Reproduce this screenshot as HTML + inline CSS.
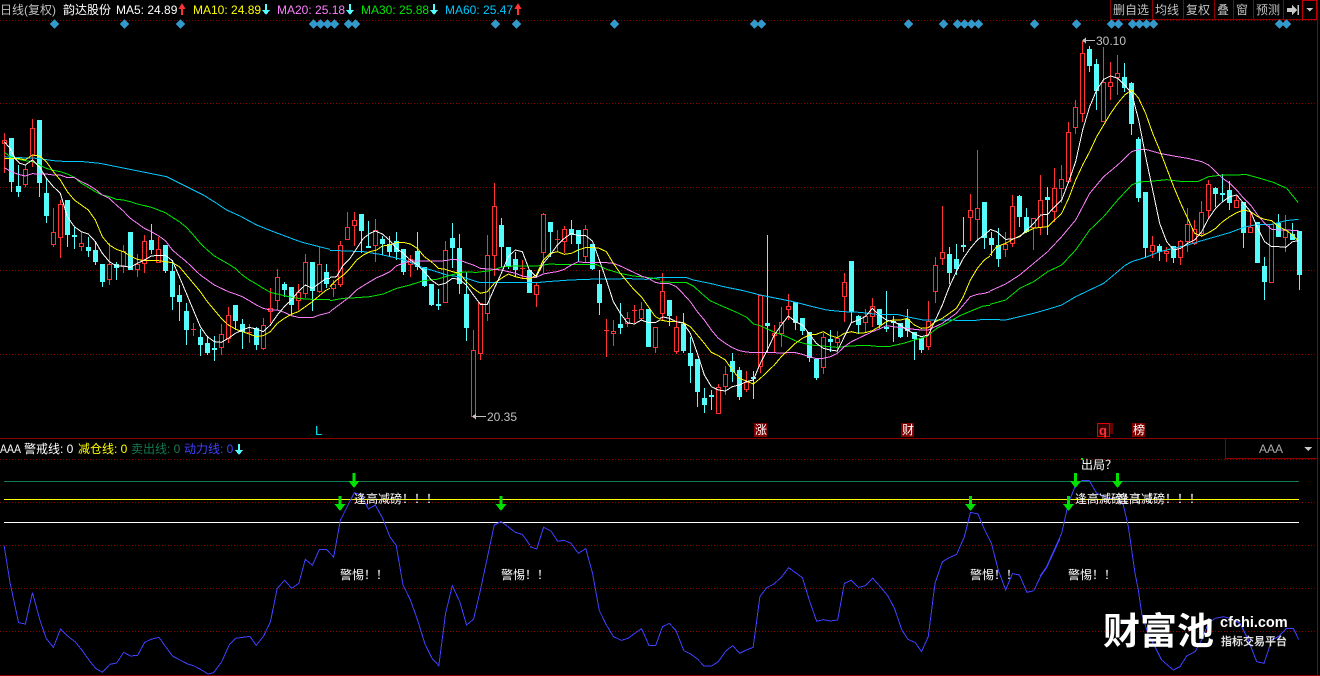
<!DOCTYPE html>
<html><head><meta charset="utf-8"><title>AAA</title>
<style>
html,body{margin:0;padding:0;background:#000;width:1320px;height:676px;overflow:hidden}
svg{display:block;position:absolute;left:0;top:0}
text{font-family:"Liberation Sans","WenQuanYi Zen Hei","Noto Sans CJK SC",sans-serif;font-size:12px}
polyline{fill:none;vector-effect:non-scaling-stroke;stroke-width:1}
.w polyline{stroke:#fff}.y polyline{stroke:#ff0}.m polyline{stroke:#ff80ff}.g polyline{stroke:#00e600}.c polyline{stroke:#00c8ff}
</style></head><body>
<svg width="1320" height="676" viewBox="0 0 1320 676" xmlns="http://www.w3.org/2000/svg" shape-rendering="crispEdges">
<rect width="1320" height="676" fill="#000"/>
<!-- grid -->
<g stroke="#8c0000" stroke-dasharray="1 2" fill="none">
<path d="M0 20.5H1320M0 103.5H1320M0 187.5H1320M0 270.5H1320M0 354.5H1320M0 459.5H1320M0 502.5H1320M0 545.5H1320M0 588.5H1320M0 631.5H1320"/>
</g>
<!-- frame -->
<g stroke="#8c0000" fill="none">
<path d="M0 438.5H1320M0 675.5H1320M1317.5 0V676M1225.5 438V458.5H1317"/>
<path d="M1110.5 0V19.5H1302M1152.5 0V19M1183.5 0V19M1214.5 0V19M1233.5 0V19M1253.5 0V19M1283.5 0V19"/>
<path d="M1302.5 0.5H1316.5V19.5H1302.5z" stroke="#c00000"/>
</g>
<!-- diamonds -->
<g fill="#3399cc" stroke="#3399cc" stroke-width="1" stroke-linejoin="round">
<path d="M54.5 20l4 4-4 4-4-4zM124.5 20l4 4-4 4-4-4zM180.5 20l4 4-4 4-4-4zM313.5 20l4 4-4 4-4-4zM320.5 20l4 4-4 4-4-4zM327.5 20l4 4-4 4-4-4zM334.5 20l4 4-4 4-4-4zM348.5 20l4 4-4 4-4-4zM355.5 20l4 4-4 4-4-4zM495.5 20l4 4-4 4-4-4zM516.5 20l4 4-4 4-4-4zM614.5 20l4 4-4 4-4-4zM754.5 20l4 4-4 4-4-4zM761.5 20l4 4-4 4-4-4zM908.5 20l4 4-4 4-4-4zM943.5 20l4 4-4 4-4-4zM957.5 20l4 4-4 4-4-4zM964.5 20l4 4-4 4-4-4zM971.5 20l4 4-4 4-4-4zM978.5 20l4 4-4 4-4-4zM1034.5 20l4 4-4 4-4-4zM1076.5 20l4 4-4 4-4-4zM1111.5 20l4 4-4 4-4-4zM1118.5 20l4 4-4 4-4-4zM1132.5 20l4 4-4 4-4-4zM1139.5 20l4 4-4 4-4-4zM1146.5 20l4 4-4 4-4-4zM1153.5 20l4 4-4 4-4-4zM1279.5 20l4 4-4 4-4-4zM1286.5 20l4 4-4 4-4-4z"/>
</g>
<!-- cyan candles -->
<path fill="none" stroke="#54fcfc" d="M11.5 138V192M18.5 165V197M39.5 120V197M46.5 179V223M67.5 200V247M74.5 227V249M88.5 237V257M95.5 241V265M102.5 264V287M116.5 262V280M151.5 224V254M165.5 245V273M172.5 260V310M179.5 285V321M186.5 303V345M200.5 329V356M207.5 336V355M214.5 336V361M235.5 305V330M242.5 319V349M256.5 327V350M284.5 282V297M291.5 287V316M312.5 262V311M326.5 264V288M361.5 214V253M368.5 221V248M382.5 236V255M389.5 236V257M396.5 232V260M403.5 249V275M417.5 232V270M424.5 267V287M431.5 284V306M438.5 289V310M452.5 223V268M459.5 234V294M466.5 272V341M501.5 218V267M508.5 247V269M515.5 252V277M550.5 222V257M571.5 220V244M578.5 230V261M592.5 244V270M599.5 270V315M620.5 303V334M669.5 300V326M683.5 313V353M690.5 337V383M697.5 359V407M704.5 388V413M711.5 390V410M732.5 353V382M739.5 367V400M753.5 371V399M767.5 235V353M795.5 302V330M802.5 318V335M809.5 332V362M816.5 359V380M830.5 330V352M851.5 261V322M858.5 315V333M879.5 309V328M886.5 291V332M893.5 316V342M900.5 323V338M907.5 309V337M914.5 332V360M921.5 338V353M949.5 247V284M956.5 244V275M963.5 217V252M984.5 202V249M991.5 232V256M998.5 228V267M1019.5 195V227M1026.5 208V233M1047.5 187V235M1089.5 46V72M1096.5 59V110M1124.5 63V92M1131.5 82V135M1138.5 137V202M1145.5 192V257M1159.5 244V261M1173.5 246V263M1215.5 187V207M1222.5 174V202M1229.5 181V210M1243.5 202V248M1264.5 257V300M1278.5 214V237M1292.5 223V240M1299.5 231V290"/>
<path fill="#54fcfc" d="M9 138h5V182h-5zM16 186h5V192h-5zM37 120h5V183h-5zM44 193h5V216h-5zM65 200h5V235h-5zM72 235h5V237h-5zM86 247h5V251h-5zM93 250h5V262h-5zM100 264h5V282h-5zM114 264h5V268h-5zM128 232h5V270h-5zM149 240h5V250h-5zM163 245h5V271h-5zM170 271h5V297h-5zM177 295h5V302h-5zM184 311h5V330h-5zM198 337h5V345h-5zM205 343h5V353h-5zM212 348h5V350h-5zM233 305h5V321h-5zM240 324h5V332h-5zM254 328h5V345h-5zM282 284h5V290h-5zM289 287h5V305h-5zM310 262h5V291h-5zM324 272h5V284h-5zM359 214h5V231h-5zM366 246h5V248h-5zM380 239h5V244h-5zM387 244h5V252h-5zM394 241h5V252h-5zM401 249h5V272h-5zM415 251h5V267h-5zM422 267h5V286h-5zM429 284h5V305h-5zM436 304h5V306h-5zM450 238h5V248h-5zM457 248h5V284h-5zM464 294h5V328h-5zM499 225h5V247h-5zM506 247h5V267h-5zM513 259h5V270h-5zM527 270h5V293h-5zM548 222h5V232h-5zM569 229h5V235h-5zM576 230h5V244h-5zM590 244h5V269h-5zM597 284h5V303h-5zM618 324h5V328h-5zM646 309h5V347h-5zM667 300h5V316h-5zM681 324h5V351h-5zM688 353h5V366h-5zM695 359h5V392h-5zM702 398h5V405h-5zM709 395h5V397h-5zM730 361h5V372h-5zM737 370h5V397h-5zM751 377h5V379h-5zM765 323h5V326h-5zM793 302h5V323h-5zM800 318h5V331h-5zM807 332h5V358h-5zM814 359h5V378h-5zM828 339h5V342h-5zM849 261h5V312h-5zM856 316h5V325h-5zM877 309h5V325h-5zM884 327h5V329h-5zM891 321h5V323h-5zM898 323h5V337h-5zM905 319h5V331h-5zM912 332h5V339h-5zM919 338h5V350h-5zM947 254h5V273h-5zM954 259h5V269h-5zM961 245h5V247h-5zM982 202h5V238h-5zM989 238h5V245h-5zM996 245h5V259h-5zM1017 196h5V217h-5zM1024 217h5V232h-5zM1045 197h5V200h-5zM1087 49h5V66h-5zM1094 64h5V91h-5zM1122 77h5V88h-5zM1129 83h5V124h-5zM1136 139h5V198h-5zM1143 192h5V248h-5zM1157 246h5V252h-5zM1171 246h5V258h-5zM1213 188h5V194h-5zM1220 193h5V195h-5zM1227 190h5V203h-5zM1241 202h5V233h-5zM1255 222h5V263h-5zM1262 266h5V282h-5zM1276 223h5V237h-5zM1290 234h5V240h-5zM1297 231h5V275h-5z"/>
<!-- red candles -->
<path fill="none" stroke="#ff3232" d="M4.5 133V173M25.5 165V187M32.5 119V167M53.5 208V247M60.5 200V258M81.5 232V251M109.5 243V285M123.5 245V273M137.5 254V277M144.5 235V273M158.5 237V262M193.5 323V336M221.5 324V355M228.5 307V343M249.5 324V343M263.5 318V350M270.5 288V323M277.5 269V310M298.5 284V310M305.5 254V298M319.5 247V293M333.5 280V297M340.5 241V287M347.5 212V239M354.5 212V246M375.5 219V262M410.5 255V277M445.5 241V302M473.5 330V416M480.5 303V360M487.5 235V321M494.5 183V276M522.5 260V278M536.5 283V307M543.5 213V273M557.5 230V252M564.5 226V253M585.5 225V262M606.5 319V357M613.5 320V346M627.5 312V327M634.5 305V323M641.5 302V321M655.5 327V353M662.5 273V320M676.5 316V354M718.5 384V413M725.5 366V395M746.5 371V392M760.5 295V373M774.5 325V353M781.5 307V347M788.5 294V320M823.5 333V374M837.5 331V350M844.5 273V322M865.5 309V332M872.5 298V327M928.5 301V350M935.5 257V303M942.5 206V265M970.5 194V241M977.5 150V240M1005.5 232V257M1012.5 195V247M1033.5 218V250M1040.5 175V235M1054.5 168V222M1061.5 165V203M1068.5 122V182M1075.5 100V134M1082.5 41V122M1103.5 47V122M1110.5 62V100M1117.5 55V95M1152.5 236V258M1166.5 247V262M1180.5 240V265M1187.5 208V252M1194.5 220V245M1201.5 201V237M1208.5 180V218M1236.5 196V208M1250.5 212V232M1271.5 224V282M1285.5 215V252"/>
<path fill="#000" stroke="#ff3232" d="M2.5 140.5h4V143.5h-4zM23.5 169.5h4V184.5h-4zM30.5 128.5h4V155.5h-4zM51.5 232.5h4V244.5h-4zM58.5 204.5h4V237.5h-4zM79.5 243.5h4V246.5h-4zM107.5 264.5h4V279.5h-4zM121.5 251.5h4V266.5h-4zM135.5 264.5h4V269.5h-4zM142.5 241.5h4V263.5h-4zM156.5 249.5h4V262.5h-4zM219.5 334.5h4V347.5h-4zM226.5 315.5h4V338.5h-4zM261.5 325.5h4V348.5h-4zM268.5 308.5h4V311.5h-4zM275.5 277.5h4V300.5h-4zM296.5 292.5h4V300.5h-4zM303.5 262.5h4V293.5h-4zM317.5 264.5h4V291.5h-4zM331.5 284.5h4V288.5h-4zM338.5 245.5h4V284.5h-4zM345.5 227.5h4V239.5h-4zM352.5 220.5h4V225.5h-4zM373.5 230.5h4V245.5h-4zM408.5 259.5h4V264.5h-4zM443.5 250.5h4V302.5h-4zM471.5 350.5h4V416.5h-4zM478.5 303.5h4V353.5h-4zM485.5 255.5h4V313.5h-4zM492.5 206.5h4V255.5h-4zM534.5 285.5h4V294.5h-4zM541.5 214.5h4V252.5h-4zM562.5 229.5h4V241.5h-4zM583.5 229.5h4V256.5h-4zM611.5 331.5h4V333.5h-4zM625.5 318.5h4V323.5h-4zM639.5 309.5h4V318.5h-4zM653.5 327.5h4V347.5h-4zM660.5 291.5h4V313.5h-4zM674.5 327.5h4V351.5h-4zM716.5 387.5h4V413.5h-4zM723.5 374.5h4V386.5h-4zM744.5 382.5h4V389.5h-4zM758.5 295.5h4V366.5h-4zM772.5 333.5h4V335.5h-4zM779.5 322.5h4V333.5h-4zM786.5 306.5h4V309.5h-4zM821.5 337.5h4V367.5h-4zM835.5 338.5h4V342.5h-4zM842.5 282.5h4V296.5h-4zM863.5 316.5h4V322.5h-4zM870.5 306.5h4V316.5h-4zM926.5 321.5h4V346.5h-4zM933.5 265.5h4V291.5h-4zM940.5 252.5h4V258.5h-4zM968.5 210.5h4V217.5h-4zM975.5 208.5h4V219.5h-4zM1003.5 244.5h4V249.5h-4zM1010.5 206.5h4V243.5h-4zM1031.5 218.5h4V227.5h-4zM1038.5 200.5h4V227.5h-4zM1052.5 188.5h4V211.5h-4zM1059.5 179.5h4V188.5h-4zM1066.5 132.5h4V181.5h-4zM1073.5 107.5h4V127.5h-4zM1080.5 53.5h4V113.5h-4zM1101.5 82.5h4V121.5h-4zM1108.5 82.5h4V86.5h-4zM1115.5 73.5h4V77.5h-4zM1150.5 245.5h4V251.5h-4zM1164.5 251.5h4V253.5h-4zM1178.5 241.5h4V257.5h-4zM1185.5 224.5h4V241.5h-4zM1192.5 229.5h4V243.5h-4zM1199.5 212.5h4V233.5h-4zM1206.5 184.5h4V210.5h-4zM1234.5 200.5h4V207.5h-4zM1248.5 227.5h4V232.5h-4zM1269.5 224.5h4V282.5h-4zM1283.5 230.5h4V237.5h-4z"/>
<path stroke="#ff3232" fill="none" d="M191 329.5h5M247 332.5h5M520 268.5h5M555 239.5h5M604 330.5h5M632 310.5h5"/>
<!-- moving averages -->
<g>
<g transform="translate(0 130) scale(.33333)">
<g class="c"><polyline points="13,80 55,83 97,84 118,86 160,92 190,94 250,95 300,100 340,108 400,120 440,128 500,140 530,155 570,175 610,195 650,220 680,240 720,258 770,285 820,305 860,320 900,335 950,348 990,358"/></g>
<g class="g"><polyline points="13,67 34,82 55,88 76,92 97,95 118,105 139,115 160,121 181,125 202,132 223,142 244,160 265,172 286,185 307,195 328,200 349,208 370,210 391,215 412,222 433,227 454,232 475,240 496,248 517,262 538,275 559,292 580,315 601,340 622,360 643,378 664,390 685,402 706,415 727,435 748,450 769,462 790,475 811,487 832,492 853,497 874,502 895,505 916,507 937,508 958,508 979,508 990,508"/></g>
<g class="m"><polyline points="13,113 34,125 55,133 76,138 97,131 118,132 139,132 160,135 181,135 202,143 223,143 244,155 265,165 286,178 307,195 328,205 349,225 370,243 391,265 412,280 433,295 454,305 475,317 496,332 517,360 538,378 559,395 580,415 601,435 622,450 643,465 664,475 685,485 706,492 727,500 748,512 769,525 790,535 811,540 832,540 853,547 874,557 895,562 916,562 937,563 958,555 979,550 990,547"/></g>
<g class="y"><polyline points="13,85 34,85 55,85 76,90 97,75 118,78 139,95 160,125 181,150 202,185 223,210 244,225 265,240 286,270 307,320 328,345 349,358 370,365 391,378 412,388 433,392 454,392 475,392 496,395 517,398 538,410 559,435 580,460 601,485 622,515 643,540 664,565 685,585 706,597 727,605 748,612 769,620 790,617 811,605 832,580 853,565 874,553 895,545 916,530 937,515 958,497 979,480 990,475"/></g>
<g class="w"><polyline points="13,35 30,55 45,85 60,100 76,105 97,90 118,110 139,145 160,170 181,190 202,260 223,290 244,305 265,312 286,335 307,370 328,395 349,408 370,408 391,412 412,400 433,390 454,378 475,376 496,376 517,392 538,440 559,490 580,540 601,590 622,620 643,635 664,637 685,625 706,610 727,600 748,592 769,597 790,605 811,585 832,555 853,530 874,510 895,485 916,465 937,475 958,460 979,445 990,445"/></g>
</g>
<g transform="translate(330 170) scale(.33333)">
<g class="c"><polyline points="0,241 50,243 100,245 150,253 190,262 230,272 270,290 310,302 350,315 400,322 450,338 500,338 550,338 620,338 650,335 720,330 800,327 900,326 950,328 990,322"/></g>
<g class="g"><polyline points="0,392 40,385 80,383 120,380 160,372 200,355 240,345 280,332 320,328 360,316 400,306 440,307 480,302 520,290 560,288 620,288 660,282 700,284 750,283 800,284 830,298 870,310 910,318 950,322 990,328"/></g>
<g class="m"><polyline points="0,425 20,410 40,395 60,380 80,360 100,347 120,335 140,323 160,315 180,305 200,287 220,280 241,273 262,273 283,273 304,273 325,273 346,272 367,268 388,270 409,278 430,285 451,295 472,297 493,298 514,300 535,305 556,310 577,318 598,322 619,322 640,312 661,308 682,305 703,298 724,285 745,275 766,278 787,278 808,278 829,278 850,280 871,288 892,298 913,308 934,318 955,325 976,337 990,340"/></g>
<g class="y"><polyline points="0,350 20,330 40,315 60,295 80,270 100,255 120,245 140,240 157,228 178,225 199,218 220,217 241,222 262,235 283,260 304,275 325,295 346,298 367,305 388,310 409,335 430,355 451,370 472,365 493,340 514,325 535,312 556,320 577,325 598,327 619,315 640,270 661,250 682,245 703,253 724,250 745,240 766,233 787,232 808,235 829,245 850,280 871,310 892,335 913,360 934,380 955,410 976,440 990,447"/></g>
<g class="w"><polyline points="0,322 20,320 40,285 60,265 80,235 100,205 120,190 136,183 157,192 178,210 199,235 220,250 241,270 262,285 283,305 304,330 325,345 346,340 367,325 388,328 409,345 430,375 451,403 472,403 493,355 514,310 535,260 556,240 577,245 598,300 619,320 640,280 661,255 682,225 703,205 724,190 745,197 766,196 787,213 808,270 829,330 850,395 871,430 892,458 913,462 934,450 955,458 976,458 990,450"/></g>
</g>
<g transform="translate(660 180) scale(.33333)">
<g class="c"><polyline points="0,292 78,292 100,300 150,310 200,322 250,332 300,345 350,355 400,365 450,378 500,390 550,395 600,397 650,403 710,403 750,412 790,420 850,420 940,422 970,418 990,418"/></g>
<g class="g"><polyline points="0,306 40,307 80,308 100,318 130,345 150,362 190,380 230,397 260,412 280,432 300,437 340,455 380,470 410,484 450,495 490,498 530,502 570,498 620,496 650,499 690,499 730,490 770,478 800,470 830,445 860,430 900,407 940,390 970,378 990,376"/></g>
<g class="m"><polyline points="0,311 28,311 49,320 70,342 91,365 112,395 133,420 154,450 175,475 196,490 217,503 238,512 259,516 280,518 322,518 343,518 364,519 385,518 406,518 427,523 448,530 469,536 490,535 511,530 532,520 553,500 574,485 595,475 616,465 637,455 658,447 679,437 700,440 721,443 742,445 763,448 784,450 805,450 826,440 847,430 868,415 889,400 910,375 931,350 952,343 973,340 990,335"/></g>
<g class="y"><polyline points="0,420 28,425 49,425 70,428 91,440 112,465 133,490 154,517 175,527 196,540 217,570 238,595 259,603 280,612 301,595 322,575 343,555 364,530 385,510 406,490 427,475 448,465 469,463 490,455 511,467 532,473 553,460 574,455 595,460 616,458 637,452 658,440 679,425 700,420 721,420 742,415 763,435 784,445 805,443 826,425 847,415 868,400 889,385 910,350 931,300 952,265 973,240 990,228"/></g>
<g class="w"><polyline points="0,415 10,411 28,415 49,425 70,430 91,460 112,520 133,585 154,620 175,630 196,633 217,620 238,615 259,605 280,600 301,550 322,510 343,465 364,435 385,408 406,425 427,435 448,462 469,490 490,505 511,510 532,513 553,470 574,428 595,420 616,410 637,385 658,405 679,420 700,425 721,435 742,450 763,462 784,470 805,465 826,420 847,375 868,320 889,275 910,235 931,205 952,180 973,165 990,150"/></g>
</g>
<g transform="translate(990 30) scale(.33333)">
<g class="c"><polyline points="0,868 47,870 89,860 131,850 173,838 215,825 257,800 299,780 341,760 383,725 404,707 425,695 467,682 509,665 551,655 593,645 635,632 677,620 719,608 761,592 803,583 845,583 866,578 887,572 925,568"/></g>
<g class="g"><polyline points="0,823 47,810 89,775 131,755 173,725 215,705 257,660 299,600 341,560 383,510 425,465 446,456 490,453 530,449 570,454 625,454 656,440 700,435 770,434 810,445 850,457 890,475 925,518"/></g>
<g class="m"><polyline points="0,783 47,762 89,735 131,700 173,665 215,620 257,570 299,490 341,440 383,405 404,385 425,365 446,358 467,358 509,370 551,378 593,385 635,395 656,405 677,425 698,445 719,460 740,480 761,505 782,525 803,555 824,580 845,598 866,600 887,600 925,602"/></g>
<g class="y"><polyline points="0,675 20,650 47,640 68,628 89,618 110,605 131,595 152,592 173,590 194,570 215,550 236,505 257,450 278,405 299,365 320,320 341,285 362,250 383,220 404,195 425,180 446,205 467,250 488,310 509,360 530,415 551,470 572,520 593,565 614,610 635,618 656,608 677,595 698,575 719,560 740,548 761,540 782,545 803,560 824,568 845,572 866,590 887,600 908,615 925,632"/></g>
<g class="w"><polyline points="0,598 20,605 47,628 68,627 89,620 110,600 131,580 152,555 173,553 194,530 215,510 236,455 257,395 278,300 299,230 320,180 341,148 362,138 383,145 404,165 425,190 446,270 467,380 488,480 509,580 530,635 551,660 572,655 593,640 614,630 635,605 656,565 677,535 698,515 719,500 740,495 761,520 782,545 803,595 824,635 845,650 866,650 887,652 908,635 925,632"/></g>
</g>
</g>
<!-- indicator levels -->
<path fill="none" stroke="#127a50" d="M4 481.5H1299"/>
<path fill="none" stroke="#ffff00" d="M4 499.5H1299"/>
<path fill="none" stroke="#ffffff" d="M4 522.5H1299"/>
<!-- blue line -->
<g>
<polyline stroke="#4040ff" transform="translate(0 420) scale(.33807 .33333)" points="12,376 30,490 55,608 75,612 96,518 118,600 137,656 158,682 179,627 200,648 222,665 242,690 263,720 284,746 303,757 325,733 345,729 366,697 386,708 407,706 428,667 449,657 470,652 510,708 555,732 572,737 600,752 615,762 632,758 655,727 678,675 697,655 739,649 758,676 780,648 800,605 820,505 842,481 863,505 884,490 903,418 924,436 945,388 965,388 987,411 1007,300 1048,218 1068,225 1090,267 1110,255 1132,295 1153,350 1172,376 1192,495 1214,540 1235,600 1257,672 1278,715 1298,737 1318,580 1338,497 1360,545 1380,615 1401,597 1420,515 1440,420 1462,315 1482,305 1503,320 1524,337 1545,343 1568,376"/>
<polyline stroke="#4040ff" transform="translate(530 420) scale(.33807 .33333)" points="0,380 20,387 40,322 62,333 82,364 100,361 120,369 143,400 165,386 185,460 205,572 226,615 247,650 270,661 290,655 310,640 330,626 352,676 372,676 392,620 412,610 432,632 455,692 475,702 495,717 515,738 537,738 557,725 580,692 600,677 620,700 640,690 660,682 680,530 700,503 722,492 745,470 765,443 785,458 806,473 826,540 848,604 868,599 888,603 910,600 930,490 950,481 972,502 992,497 1014,475 1036,500 1058,527 1078,565 1100,630 1118,658 1140,668 1158,695 1178,650 1198,490 1220,425 1240,413 1262,403 1285,350 1303,277 1325,282 1345,330 1365,370 1385,450 1407,510 1427,461 1448,465 1470,517 1490,512 1510,470 1528,443 1548,400 1568,355"/>
<polyline stroke="#4040ff" transform="translate(1040 420) scale(.33333)" points="0,468 20,440 40,395 65,340 85,250 105,200 125,182 148,182 170,220 190,228 210,236 233,232 250,255 265,320 285,460 295,510 305,580 325,645 345,680 365,720 400,750 420,740 440,708 465,695 485,660 505,610 525,595 550,590 570,595 600,610 625,660 650,725 672,730 695,660 715,650 740,625 760,625 776,658"/>
</g>
<!-- green arrows -->
<g fill="#00e000">
<path d="M352.5 473h3v8h4l-5.500 7-5.500-7h4zM338.500 496h3v8h4l-5.500 7-5.500-7h4zM499.500 496h3v8h4l-5.500 7-5.500-7h4zM969 496h3v8h4l-5.500 7-5.500-7h4zM1074 473h3v8h4l-5.500 7-5.500-7h4zM1116 473h3v8h4l-5.500 7-5.500-7h4zM1067 496h3v8h4l-5.500 7-5.500-7h4z"/>
<path d="M1081 458h2v2h-2z"/>
</g>
<!-- text -->
<g shape-rendering="auto">
<text x="0" y="14" fill="#c0c0c0">日线(复权)</text>
<text x="63" y="14" fill="#fff">韵达股份</text>
<text x="116" y="14" fill="#fff">MA5: 24.89</text>
<text x="193" y="14" fill="#ff0">MA10: 24.89</text>
<text x="277" y="14" fill="#ff80ff">MA20: 25.18</text>
<text x="361" y="14" fill="#00e600">MA30: 25.88</text>
<text x="445" y="14" fill="#00c8ff">MA60: 25.47</text>
<g fill="#c0c0c0">
<text x="1113" y="14">删自选</text>
<text x="1155" y="14">均线</text>
<text x="1186" y="14">复权</text>
<text x="1217" y="14">叠</text>
<text x="1236" y="14">窗</text>
<text x="1256" y="14">预测</text>
<text x="1096" y="45">30.10</text>
<text x="487" y="421">20.35</text>
<text x="1259" y="453" fill="#aaa">AAA</text>
</g>
<text x="0" y="453" fill="#fff" textLength="21" lengthAdjust="spacingAndGlyphs">AAA</text>
<text x="24" y="453" fill="#fff">警戒线: 0</text>
<text x="78" y="453" fill="#ff0">减仓线: 0</text>
<text x="131" y="453" fill="#127a50">卖出线: 0</text>
<text x="184" y="453" fill="#4040ff">动力线: 0</text>
<text x="315" y="435" fill="#00e0f0" style="font-size:13px">L</text>
<g fill="#fff">
<text x="354" y="503">逢高减磅！！！</text>
<text x="1075" y="503">逢高减磅！！！</text>
<text x="1117" y="503">逢高减磅！！！</text>
<text x="340" y="579">警惕！！</text>
<text x="501" y="579">警惕！！</text>
<text x="970" y="579">警惕！！</text>
<text x="1068" y="579">警惕！！</text>
<text x="1081" y="469">出局？</text>
</g>
<!-- signals -->
<rect x="754" y="423" width="13" height="14" fill="#800000"/>
<text x="755" y="434" fill="#fff">涨</text>
<rect x="901" y="423" width="13" height="14" fill="#800000"/>
<text x="902" y="434" fill="#fff">财</text>
<rect x="1110" y="423" width="3" height="11" fill="#600000"/>
<rect x="1097.5" y="423.500" width="12" height="13" fill="#300" stroke="#e00000"/>
<text x="1099" y="435" fill="#ff3232" style="font-weight:bold;font-size:13px">q</text>
<rect x="1132" y="423" width="13" height="14" fill="#800000"/>
<text x="1133" y="434" fill="#fff">榜</text>
<!-- watermark -->
<text x="1103" y="644" fill="#fff" style="font-family:'Noto Sans CJK SC',sans-serif;font-size:37px;font-weight:700">财富池</text>
<text x="1220" y="627" fill="#fff" style="font-weight:700;font-size:14.500px">cfchi.com</text>
<text x="1221" y="645" fill="#ddd" style="font-family:'Noto Sans CJK SC',sans-serif;font-size:11px;font-weight:700">指标交易平台</text>
</g>
<!-- header arrows -->
<g fill="#ff3232"><path d="M181 9h-2.500l3.500-6 3.500 6h-2.500v6h-2zM517 9h-2.500l3.500-6 3.500 6h-2.500v6h-2z"/></g>
<g fill="#54fcfc"><path d="M265 4h2v6h3l-4 5-4-5h3zM349 4h2v6h3l-4 5-4-5h3zM433 4h2v6h3l-4 5-4-5h3zM238 444h2v6h3l-4 5-4-5h3z"/></g>
<!-- leader arrows -->
<path fill="none" stroke="#c0c0c0" d="M1085 40.500H1095M475 416.500H486"/>
<path fill="#c0c0c0" d="M1082 40.500l4-3v6zM472 416.500l4-3v6z"/>
<!-- toolbar icons -->
<path fill="#c8c8c8" d="M1287 8h5V5l5 5-5 5v-3h-5zM1297.500 5h1.500v10h-1.500zM1306 8h7l-3.500 3.500zM1304 447h8l-4 4z"/>
</svg>
</body></html>
